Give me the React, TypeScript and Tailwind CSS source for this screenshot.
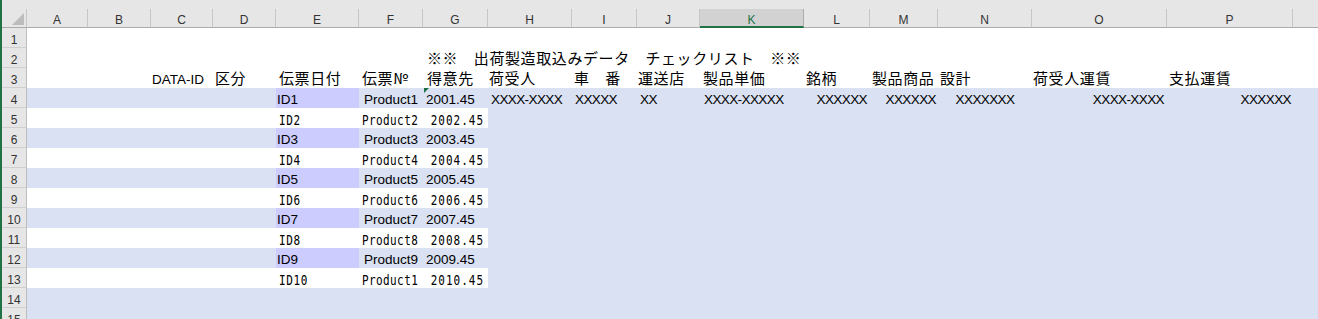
import React from 'react';

type Col = { k: string; w: string };
const COLS: Col[] = [
  { k: 'A', w: 'w-[61px]' },
  { k: 'B', w: 'w-[63px]' },
  { k: 'C', w: 'w-[62px]' },
  { k: 'D', w: 'w-[63px]' },
  { k: 'E', w: 'w-[83px]' },
  { k: 'F', w: 'w-[64px]' },
  { k: 'G', w: 'w-[65px]' },
  { k: 'H', w: 'w-[84px]' },
  { k: 'I', w: 'w-[65px]' },
  { k: 'J', w: 'w-[63px]' },
  { k: 'K', w: 'w-[104px]' },
  { k: 'L', w: 'w-[66px]' },
  { k: 'M', w: 'w-[68px]' },
  { k: 'N', w: 'w-[94px]' },
  { k: 'O', w: 'w-[135px]' },
  { k: 'P', w: 'w-[126px]' },
  { k: 'Q', w: 'w-[25px]' },
];

const SANS = "font-['Liberation_Sans',Arial,sans-serif] text-[13.5px] leading-[23px] text-black";
const XS = "font-['Liberation_Sans',Arial,sans-serif] text-[13.5px] leading-[23px] tracking-[-0.6px] text-black";
const CJK = "font-['Noto_Sans_CJK_JP',sans-serif] text-[15px] leading-[20px] tracking-[0.6px] text-black";
const MONO = "font-['DejaVu_Sans_Mono',monospace] text-[11px] leading-[28px] text-black";

type CellSpec = { content?: React.ReactNode; cls?: string; bg?: string };

function Mono({ children, right, track }: { children: React.ReactNode; right?: boolean; track: string }) {
  return (
    <div className={`${MONO} ${track} origin-[0_18px] scale-y-[1.33] ${right ? 'text-right' : ''}`}>{children}</div>
  );
}

function RowHead({ n }: { n: number }) {
  return (
    <div className="w-[25px] shrink-0 h-[20px] bg-[#e6e6e6] border-r border-b border-r-[#bdbdbd] border-b-[#cfcfcf] text-center font-['Liberation_Sans',Arial,sans-serif] text-[12px] leading-[24px] text-[#333]">
      {n}
    </div>
  );
}

function DataRow({ n, rowBg, cells }: { n: number; rowBg: string; cells: Record<string, CellSpec> }) {
  return (
    <div className={`flex h-[20px] ${rowBg}`}>
      <RowHead n={n} />
      {COLS.map((c) => {
        const s = cells[c.k];
        return (
          <div
            key={c.k}
            className={`${c.w} shrink-0 h-[20px] whitespace-nowrap relative ${s?.bg ?? ''} ${s?.cls ?? ''}`}
          >
            {s?.content}
          </div>
        );
      })}
    </div>
  );
}

const BLUE = 'bg-[#d9e1f2]';
const LAV = 'bg-[#ccccff]';

function evenRow(n: number, id: number, withTri = false, extra: Record<string, CellSpec> = {}) {
  return (
    <DataRow
      key={n}
      n={n}
      rowBg={BLUE}
      cells={{
        E: { bg: LAV, content: <div className={`${SANS} pl-[1px]`}>ID{id}</div> },
        F: { cls: 'overflow-hidden', content: <div className={`${SANS} pl-[5px]`}>Product{id}</div> },
        G: {
          content: (
            <>
              {withTri && (
                <svg className="absolute left-[1px] top-0" width="5" height="5" viewBox="0 0 5 5">
                  <polygon points="0,0 5,0 0,5" fill="#1e7145" />
                </svg>
              )}
              <div className={`${SANS} pl-[3px]`}>{`${2000 + id}.45`}</div>
            </>
          ),
        },
        ...extra,
      }}
    />
  );
}

function oddRow(n: number, id: number) {
  const white: Record<string, CellSpec> = {};
  ['A', 'B', 'C', 'D'].forEach((k) => (white[k] = { bg: 'bg-white' }));
  return (
    <DataRow
      key={n}
      n={n}
      rowBg={BLUE}
      cells={{
        ...white,
        E: { bg: 'bg-white', content: <div className="pl-[3px]"><Mono track="tracking-[0.6px]">ID{id}</Mono></div> },
        F: {
          bg: 'bg-white',
          content: (
            <div className="w-[59px] h-[20px] overflow-hidden pl-[3px]">
              <Mono track="tracking-[0.4px]">Product{id}</Mono>
            </div>
          ),
        },
        G: {
          bg: 'bg-white',
          content: (
            <div className="pr-[4px]">
              <Mono right track="tracking-[1px]">{`${2000 + id}.45`}</Mono>
            </div>
          ),
        },
      }}
    />
  );
}

export default function App() {
  const rows: React.ReactNode[] = [];
  rows.push(<DataRow key={1} n={1} rowBg="bg-white" cells={{}} />);
  rows.push(
    <DataRow
      key={2}
      n={2}
      rowBg="bg-white"
      cells={{
        G: { content: <div className={`${CJK} pl-[4px]`}>※※　出荷製造取込みデータ　チェックリスト　※※</div> },
      }}
    />
  );
  rows.push(
    <DataRow
      key={3}
      n={3}
      rowBg="bg-white"
      cells={{
        C: { content: <div className={`${SANS} pl-[1px]`}>DATA-ID</div> },
        D: { content: <div className={`${CJK} pl-[2px]`}>区分</div> },
        E: { content: <div className={`${CJK} pl-[3px]`}>伝票日付</div> },
        F: { content: <div className={`${CJK} pl-[3px]`}>伝票№</div> },
        G: { content: <div className={`${CJK} pl-[4px]`}>得意先</div> },
        H: { content: <div className={`${CJK} pl-[1px]`}>荷受人</div> },
        I: { content: <div className={`${CJK} pl-[2px]`}>車　番</div> },
        J: { content: <div className={`${CJK} pl-[1px]`}>運送店</div> },
        K: { content: <div className={`${CJK} pl-[3px]`}>製品単価</div> },
        L: { content: <div className={`${CJK} pl-[2px]`}>銘柄</div> },
        M: { content: <div className={`${CJK} pl-[2px]`}>製品商品</div> },
        N: { content: <div className={`${CJK} pl-[2px]`}>設計</div> },
        O: { content: <div className={`${CJK} pl-[1px]`}>荷受人運賃</div> },
        P: { content: <div className={`${CJK} pl-[2px]`}>支払運賃</div> },
      }}
    />
  );
  rows.push(
    evenRow(4, 1, true, {
      H: { content: <div className={`${XS} pl-[3px]`}>XXXX-XXXX</div> },
      I: { content: <div className={`${XS} pl-[3px]`}>XXXXX</div> },
      J: { content: <div className={`${XS} pl-[3px]`}>XX</div> },
      K: { content: <div className={`${XS} pl-[4px]`}>XXXX-XXXXX</div> },
      L: { content: <div className={`${XS} pr-[3px] text-right`}>XXXXXX</div> },
      M: { content: <div className={`${XS} pr-[2px] text-right`}>XXXXXX</div> },
      N: { content: <div className={`${XS} text-center`}>XXXXXXX</div> },
      O: { content: <div className={`${XS} pr-[3px] text-right`}>XXXX-XXXX</div> },
      P: { content: <div className={`${XS} pr-[2px] text-right`}>XXXXXX</div> },
    })
  );
  for (let i = 2; i <= 10; i++) {
    const n = i + 3;
    rows.push(i % 2 === 0 ? oddRow(n, i) : evenRow(n, i));
  }
  rows.push(<DataRow key={14} n={14} rowBg={BLUE} cells={{}} />);
  rows.push(<DataRow key={15} n={15} rowBg={BLUE} cells={{}} />);
  rows.push(<DataRow key={16} n={16} rowBg={BLUE} cells={{}} />);

  return (
    <div className="w-[1318px] h-[319px] overflow-hidden bg-white border-l-2 border-[#217346]">
      <div className="h-[9px] bg-[#e6e6e6]" />
      <div className="flex h-[19px] bg-[#e6e6e6]">
        <div className="w-[25px] shrink-0 h-full relative border-r border-b border-r-[#c6c6c6] border-b-[#ababab]">
          <svg className="absolute left-0 top-0" width="25" height="18" viewBox="0 0 25 18">
            <polygon points="10,16 22,16 22,4" fill="#bcbcbc" />
          </svg>
        </div>
        {COLS.map((c) =>
          c.k === 'K' ? (
            <div
              key={c.k}
              className={`${c.w} shrink-0 h-full bg-[#d2d2d2] border-r border-b-2 border-r-[#ababab] border-b-[#217346] text-center font-['Liberation_Sans',Arial,sans-serif] text-[12px] leading-[22px] text-[#217346]`}
            >
              {c.k}
            </div>
          ) : c.k === 'Q' ? (
            <div key={c.k} className={`${c.w} shrink-0 h-full border-b border-b-[#ababab]`} />
          ) : (
            <div
              key={c.k}
              className={`${c.w} shrink-0 h-full border-r border-b border-r-[#c6c6c6] border-b-[#ababab] text-center font-['Liberation_Sans',Arial,sans-serif] text-[12px] leading-[22px] text-[#333]`}
            >
              {c.k}
            </div>
          )
        )}
      </div>
      {rows}
    </div>
  );
}
